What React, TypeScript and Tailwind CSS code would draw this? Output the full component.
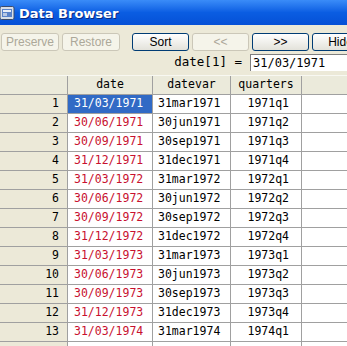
import React from "react";

type Row = {
    date: string;
    datevar: string;
    quarter: string;
}

const rows: Row[] = [
    { date: "31/03/1971", datevar: "31mar1971", quarter: "1971q1" },
    { date: "30/06/1971", datevar: "30jun1971", quarter: "1971q2" },
    { date: "30/09/1971", datevar: "30sep1971", quarter: "1971q3" },
    { date: "31/12/1971", datevar: "31dec1971", quarter: "1971q4" },
    { date: "31/03/1972", datevar: "31mar1972", quarter: "1972q1" },
    { date: "30/06/1972", datevar: "30jun1972", quarter: "1972q2" },
    { date: "30/09/1972", datevar: "30sep1972", quarter: "1972q3" },
    { date: "31/12/1972", datevar: "31dec1972", quarter: "1972q4" },
    { date: "31/03/1973", datevar: "31mar1973", quarter: "1973q1" },
    { date: "30/06/1973", datevar: "30jun1973", quarter: "1973q2" },
    { date: "30/09/1973", datevar: "30sep1973", quarter: "1973q3" },
    { date: "31/12/1973", datevar: "31dec1973", quarter: "1973q4" },
    { date: "31/03/1974", datevar: "31mar1974", quarter: "1974q1" },
];

const mono = "[font-family:'DejaVu_Sans_Mono',monospace]";

const XpButton = ({ label, disabled, width }: { label: string; disabled?: boolean; width: string }) => {
    if (disabled) {
        return (
            <div className={`${width} h-[18px] shrink-0 flex items-center justify-center rounded-[3px] border border-[#cbc7b8] bg-[#f5f4ea] text-[#aca899] text-[12px]`}>
                {label}
            </div>
        );
    }
    return (
        <div className={`${width} h-[18px] shrink-0 flex items-center justify-center rounded-[3px] border border-[#003c74] bg-gradient-to-b from-white to-[#e3e2da] text-black text-[12px]`}>
            {label}
        </div>
    );
};

export default function App() {
    return (
        <div className="w-[347px] h-[346px] overflow-hidden bg-[#ece9d8] flex flex-col [font-family:'Liberation_Sans',sans-serif]">
            {/* title bar */}
            <div className="h-[25px] shrink-0 flex items-center gap-[4px] bg-gradient-to-b from-[#3a8cf8] via-[#0a5de2] to-[#0650d6]">
                <svg width="15" height="14" viewBox="0 0 15 14" className="shrink-0">
                    <rect x="0" y="0.5" width="14" height="13" rx="1.5" fill="#d8dfe8" stroke="#3b4b6b" />
                    <rect x="2" y="3" width="10" height="8" fill="#5a83c9" />
                    <rect x="3" y="4" width="8" height="2" fill="#e8eef8" />
                    <rect x="3" y="7" width="4" height="3" fill="#b8c8e4" />
                </svg>
                <span className="pt-[2px] text-white font-bold text-[13px] [font-family:'DejaVu_Sans',sans-serif] [text-shadow:1px_1px_0_#0a2a80]">Data Browser</span>
            </div>

            {/* toolbar */}
            <div className="h-[27px] shrink-0 flex items-end pl-[1px] pb-[1px]">
                <div className="flex gap-[3px]">
                    <XpButton label="Preserve" disabled width="w-[58px]" />
                    <XpButton label="Restore" disabled width="w-[58px]" />
                </div>
                <div className="flex gap-[3px] ml-[12px]">
                    <XpButton label="Sort" width="w-[57px]" />
                    <XpButton label="<<" disabled width="w-[57px]" />
                    <XpButton label=">>" width="w-[57px]" />
                    <XpButton label="Hide" width="w-[57px]" />
                </div>
            </div>

            {/* formula row */}
            <div className="h-[21px] shrink-0 flex items-center justify-end">
                <span className={`${mono} text-[12.5px] text-black mr-[8px] whitespace-pre`}>date[1] =</span>
                <div className={`w-[97px] h-[17px] shrink-0 bg-white border-t border-l border-[#7f7f7f] flex items-center pl-[2px] ${mono} text-[12px] text-black`}>
                    31/03/1971
                </div>
            </div>

            {/* grid */}
            <div className="mt-[2px] flex flex-col text-[11.5px]">
                <div className={`h-[20px] flex bg-[#ebeadb] border-t border-[#f8f8f2] border-b border-b-[#a0a0a0] ${mono} text-black`}>
                    <div className="w-[68px] shrink-0 border-r border-[#a0a0a0]" />
                    <div className="w-[85px] shrink-0 border-r border-[#a0a0a0] flex items-center justify-center">date</div>
                    <div className="w-[78px] shrink-0 border-r border-[#a0a0a0] flex items-center justify-center">datevar</div>
                    <div className="w-[71px] shrink-0 border-r border-[#a0a0a0] flex items-center justify-center">quarters</div>
                    <div className="flex-1" />
                </div>
                {rows.map((row, index) => (
                    <div key={row.date} className={`h-[19px] shrink-0 flex border-b border-[#a0a0a0] ${mono}`}>
                        <div className="w-[68px] shrink-0 bg-[#ece9d8] border-r border-[#a0a0a0] flex items-center justify-end pr-[8px] text-black">
                            {index + 1}
                        </div>
                        <div className={`w-[85px] shrink-0 border-r border-[#a0a0a0] flex items-center pl-[6px] ${index === 0 ? "bg-[#316ac5] text-white" : "bg-white text-[#c8102e]"}`}>
                            {row.date}
                        </div>
                        <div className="w-[78px] shrink-0 bg-white border-r border-[#a0a0a0] flex items-center pl-[5px] text-black">
                            {row.datevar}
                        </div>
                        <div className="w-[71px] shrink-0 bg-white border-r border-[#a0a0a0] flex items-center justify-end pr-[12px] text-black">
                            {row.quarter}
                        </div>
                        <div className="flex-1 bg-white" />
                    </div>
                ))}
                <div className="h-[19px] shrink-0 flex">
                    <div className="w-[68px] shrink-0 bg-[#ece9d8] border-r border-[#a0a0a0]" />
                    <div className="w-[85px] shrink-0 bg-white border-r border-[#a0a0a0]" />
                    <div className="w-[78px] shrink-0 bg-white border-r border-[#a0a0a0]" />
                    <div className="w-[71px] shrink-0 bg-white border-r border-[#a0a0a0]" />
                    <div className="flex-1 bg-white" />
                </div>
            </div>
        </div>
    );
}
